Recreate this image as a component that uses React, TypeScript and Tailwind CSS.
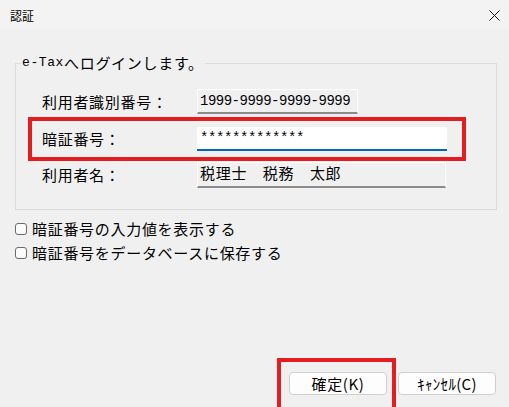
const jp = "font-['Noto_Sans_CJK_JP',sans-serif]";
const mono = "font-['Liberation_Mono','Noto_Sans_CJK_JP',monospace]";

function Label({ children }: { children: string }) {
  return (
    <span className={`w-[155px] shrink-0 text-[15px] leading-[16px] tracking-[0.7px] ${jp}`}>
      {children}
    </span>
  );
}

function CheckRow({ text }: { text: string }) {
  return (
    <label className="flex h-[24px] items-center gap-[5px]">
      <span className="h-[12px] w-[12px] shrink-0 rounded-[3px] border border-[#6b6b6b] bg-[#fbfbfb]" />
      <span className={`text-[15px] leading-[16px] tracking-[0.7px] ${jp}`}>{text}</span>
    </label>
  );
}

export default function App() {
  return (
    <div className="flex h-[407px] w-[509px] flex-col overflow-hidden bg-[#f0f0f0] text-black">
      {/* Title bar */}
      <div className="flex h-[29px] shrink-0 items-center justify-between bg-[#f3f3f3] pl-[10px] pr-[9px]">
        <span className={`pt-[2px] text-[12px] leading-[14px] ${jp}`}>認証</span>
        <svg width="11" height="11" viewBox="0 0 11 11" className="mt-[2px]">
          <path d="M0.5 0.5 L10.5 10.5 M10.5 0.5 L0.5 10.5" stroke="#1a1a1a" strokeWidth="1" fill="none" />
        </svg>
      </div>

      {/* Group box */}
      <div className="relative ml-[15px] mt-[34px] h-[147px] w-[482px] shrink-0 border border-[#dcdcdc] pt-[25px]">
        <span className="absolute left-[5px] top-[-9px] flex items-center bg-[#f0f0f0] px-[1px] leading-[16px]">
          <span className={`text-[13px] tracking-[0.6px] ${mono}`}>e-Tax</span>
          <span className={`text-[15px] tracking-[0.7px] ${jp}`}>へログインします。</span>
        </span>

        <div className="flex h-[25px] items-center pl-[26px]">
          <Label>利用者識別番号：</Label>
          <div className="flex h-[25px] w-[161px] items-center border-l border-r border-t border-white border-b-2 border-b-[#8b8b8b] pl-[2px]">
            <span className={`text-[14px] leading-[16px] tracking-[-0.5px] ${mono}`}>1999-9999-9999-9999</span>
          </div>
        </div>

        <div className="ml-[12px] mt-[3px] flex w-[438px] items-center border-4 border-[#e41e20] py-[6px] pl-[10px]">
          <Label>暗証番号：</Label>
          <div className="flex h-[24px] w-[250px] items-center border-b-2 border-[#0067c0] bg-white pl-[3px]">
            <span className={`text-[14px] leading-[16px] tracking-[-0.4px] ${mono}`}>*************</span>
          </div>
        </div>

        <div className="mt-[1px] flex h-[26px] items-center pl-[26px]">
          <Label>利用者名：</Label>
          <div className="flex h-[26px] w-[249px] items-start border-l border-r border-t border-white border-b-2 border-b-[#8b8b8b] pl-[2px] pt-[2px]">
            <span className={`text-[15px] leading-[16px] tracking-[0.7px] ${jp}`}>税理士　税務　太郎</span>
          </div>
        </div>
      </div>

      {/* Options */}
      <div className="mt-[7px] flex flex-col pl-[15px]">
        <CheckRow text="暗証番号の入力値を表示する" />
        <CheckRow text="暗証番号をデータベースに保存する" />
      </div>

      {/* Buttons */}
      <div className="mt-[93px] flex items-start justify-end gap-[2px] pr-[13px]">
        <div className="h-[60px] w-[119px] shrink-0 border-4 border-[#e41e20] pl-[8px] pt-[10px]">
          <button className={`flex h-[23px] w-[98px] items-center justify-center rounded-[4px] border border-[#d0d0d0] bg-[#fdfdfd] text-[15px] leading-[16px] tracking-[0.6px] ${jp}`}>
            確定(K)
          </button>
        </div>
        <button className={`mt-[14px] flex h-[23px] w-[98px] items-center justify-center rounded-[4px] border border-[#d0d0d0] bg-[#fdfdfd] text-[15px] leading-[16px] tracking-[0.3px] ${jp}`}>
          ｷｬﾝｾﾙ(C)
        </button>
      </div>
    </div>
  );
}
